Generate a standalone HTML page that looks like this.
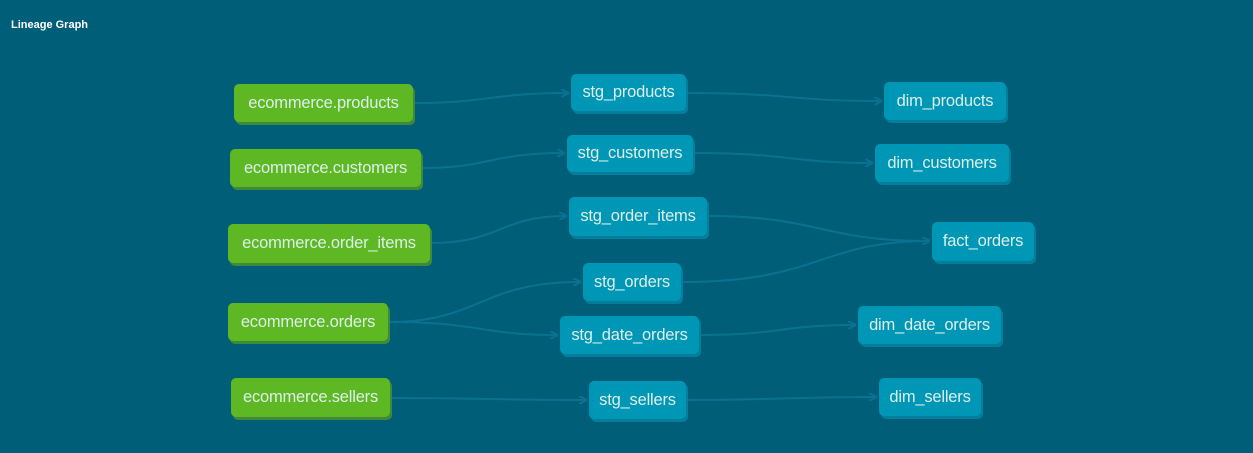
<!DOCTYPE html>
<html><head><meta charset="utf-8"><style>
html,body{margin:0;padding:0;width:1253px;height:453px;overflow:hidden;background:#005e79;font-family:"Liberation Sans","DejaVu Sans",sans-serif}
.t{position:absolute;left:11px;top:19px;color:#fff;font-weight:bold;font-size:11px}
.n{position:absolute;box-sizing:border-box;border-radius:5px;color:#dcefe9;font-size:16.5px;display:flex;align-items:center;justify-content:center;white-space:nowrap;letter-spacing:-0.2px}
.g{background:#5db823;box-shadow:2px 3px 0 #3f8a36}
.b{background:#0096b5;box-shadow:2px 3px 0 #057e9c}
svg{position:absolute;left:0;top:0}
</style></head><body>
<div class="t">Lineage Graph</div>
<svg width="1253" height="453" fill="none" stroke="#0a7290" stroke-width="2">
<defs><marker id="a" markerWidth="8" markerHeight="8" refX="7" refY="4" orient="auto" markerUnits="userSpaceOnUse"><path d="M0,0 L8,4 L0,8" stroke="#0a7290" stroke-width="2" fill="none"/></marker></defs>
<path d="M414,103 C490,103 490,93 568,93" marker-end="url(#a)"/>
<path d="M422,168 C490,168 490,153 564,153" marker-end="url(#a)"/>
<path d="M431,243 C500,243 500,216 566,216" marker-end="url(#a)"/>
<path d="M389,322 C480,322 480,282 580,282" marker-end="url(#a)"/>
<path d="M389,322 C480,322 480,335 557,335" marker-end="url(#a)"/>
<path d="M391,398 C480,398 500,400 586,400" marker-end="url(#a)"/>
<path d="M687,93 C790,93 790,101 881,101" marker-end="url(#a)"/>
<path d="M694,153 C790,153 790,163 872,163" marker-end="url(#a)"/>
<path d="M708,216 C820,216 820,241 929,241" marker-end="url(#a)"/>
<path d="M682,282 C820,282 820,241 929,241" marker-end="url(#a)"/>
<path d="M700,335 C780,335 780,325 855,325" marker-end="url(#a)"/>
<path d="M687,400 C780,400 780,397 876,397" marker-end="url(#a)"/>
</svg>
<div class="n g" style="left:234px;top:84px;width:179px;height:38px">ecommerce.products</div>
<div class="n g" style="left:230px;top:149px;width:191px;height:38px">ecommerce.customers</div>
<div class="n g" style="left:228px;top:224px;width:202px;height:39px">ecommerce.order_items</div>
<div class="n g" style="left:228px;top:303px;width:160px;height:38px">ecommerce.orders</div>
<div class="n g" style="left:231px;top:378px;width:159px;height:39px">ecommerce.sellers</div>
<div class="n b" style="left:571px;top:74px;width:115px;height:37px">stg_products</div>
<div class="n b" style="left:567px;top:135px;width:126px;height:37px">stg_customers</div>
<div class="n b" style="left:569px;top:197px;width:138px;height:39px">stg_order_items</div>
<div class="n b" style="left:583px;top:263px;width:98px;height:38px">stg_orders</div>
<div class="n b" style="left:560px;top:316px;width:139px;height:38px">stg_date_orders</div>
<div class="n b" style="left:589px;top:381px;width:97px;height:38px">stg_sellers</div>
<div class="n b" style="left:884px;top:82px;width:122px;height:38px">dim_products</div>
<div class="n b" style="left:875px;top:144px;width:134px;height:38px">dim_customers</div>
<div class="n b" style="left:932px;top:222px;width:102px;height:39px">fact_orders</div>
<div class="n b" style="left:858px;top:306px;width:143px;height:38px">dim_date_orders</div>
<div class="n b" style="left:879px;top:378px;width:102px;height:38px">dim_sellers</div>
</body></html>
